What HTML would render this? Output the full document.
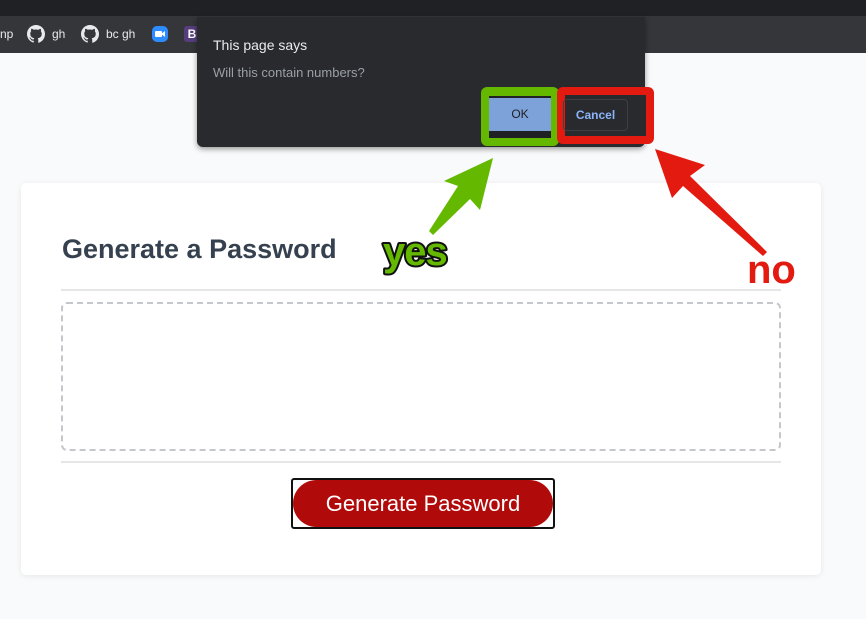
<!DOCTYPE html>
<html><head><meta charset="utf-8"><style>
*{margin:0;padding:0;box-sizing:border-box}
body{width:866px;height:619px;overflow:hidden;background:#f9fafb;font-family:"Liberation Sans",sans-serif;position:relative}
.abs{position:absolute}
</style></head><body>
<div class="abs" style="left:0;top:0;width:866px;height:16px;background:#202124"></div>
<div class="abs" style="left:0;top:16px;width:866px;height:37px;background:#35363a;color:#e8eaed;font-size:12px">
  <span class="abs" style="left:0;top:11px">np</span>
  <svg class="abs" style="left:27px;top:9px" width="18" height="18" viewBox="0 0 16 16"><path fill="#e8eaed" d="M8 0C3.58 0 0 3.58 0 8c0 3.54 2.29 6.53 5.47 7.59.4.07.55-.17.55-.38v-1.33c-2.23.48-2.7-1.07-2.7-1.07-.36-.92-.89-1.17-.89-1.17-.73-.5.05-.49.05-.49.8.06 1.23.83 1.23.83.71 1.22 1.87.87 2.330.66.07-.52.28-.87.51-1.07-1.78-.2-3.64-.89-3.64-3.95 0-.87.31-1.59.82-2.15-.08-.2-.36-1.02.08-2.12 0 0 .67-.21 2.2.82A7.6 7.6 0 0 1 8 4.04c.68 0 1.36.09 2 .27 1.53-1.04 2.2-.82 2.2-.82.44 1.1.16 1.92.08 2.12.51.56.82 1.27.82 2.15 0 3.07-1.87 3.75-3.65 3.95.29.25.54.73.54 1.48v2.2c0 .21.15.46.55.38A8 8 0 0 0 16 8c0-4.42-3.58-8-8-8z"/></svg>
  <span class="abs" style="left:52px;top:11px">gh</span>
  <svg class="abs" style="left:81px;top:9px" width="18" height="18" viewBox="0 0 16 16"><path fill="#e8eaed" d="M8 0C3.58 0 0 3.58 0 8c0 3.54 2.29 6.53 5.47 7.59.4.07.55-.17.55-.38v-1.33c-2.23.48-2.7-1.07-2.7-1.07-.36-.92-.89-1.17-.89-1.17-.73-.5.05-.49.05-.49.8.06 1.23.83 1.23.83.71 1.22 1.87.87 2.33.66.07-.52.28-.87.51-1.07-1.78-.2-3.64-.89-3.64-3.95 0-.87.31-1.59.82-2.15-.08-.2-.36-1.02.08-2.12 0 0 .67-.21 2.2.82A7.6 7.6 0 0 1 8 4.04c.68 0 1.36.09 2 .27 1.53-1.04 2.2-.82 2.2-.82.44 1.1.16 1.92.08 2.12.51.56.82 1.27.82 2.15 0 3.07-1.87 3.75-3.65 3.95.29.25.54.73.54 1.48v2.2c0 .21.15.46.55.38A8 8 0 0 0 16 8c0-4.42-3.58-8-8-8z"/></svg>
  <span class="abs" style="left:106px;top:11px">bc gh</span>
  <div class="abs" style="left:152px;top:10px;width:16px;height:16px;border-radius:5px;background:#2d8cff"><div class="abs" style="left:3px;top:5px;width:7px;height:6px;background:#fff;border-radius:1px"></div><div class="abs" style="left:10px;top:5px;width:3px;height:6px;background:#fff;clip-path:polygon(0 40%,100% 0,100% 100%,0 60%)"></div></div>
  <div class="abs" style="left:184px;top:10px;width:16px;height:16px;border-radius:3px;background:#563d7c;color:#fff;font-weight:bold;font-size:12px;text-align:center;line-height:16px">B</div>
</div>
<div class="abs" style="left:21px;top:183px;width:800px;height:392px;background:#fff;border-radius:5px;box-shadow:0 1px 6px rgba(0,0,0,.08)"></div>
<div class="abs" style="left:62px;top:234px;font-size:27px;font-weight:bold;color:#364150">Generate a Password</div>
<div class="abs" style="left:61px;top:289px;width:720px;height:2px;background:#e5e6e8"></div>
<div class="abs" style="left:61px;top:302px;width:720px;height:149px;border:2px dashed #c4c7cc;border-radius:6px"></div>
<div class="abs" style="left:61px;top:461px;width:720px;height:2px;background:#e5e6e8"></div>
<div class="abs" style="left:291px;top:478px;width:264px;height:51px;border:2px solid #111;border-radius:3px;background:#fff"></div>
<div class="abs" style="left:293px;top:480px;width:260px;height:47px;background:#b00a0a;border-radius:24px;color:#fff;font-size:22px;text-align:center;line-height:47px">Generate Password</div>
<div class="abs" style="left:197px;top:17px;width:448px;height:130px;background:#292a2d;border-radius:0 0 6px 6px;box-shadow:0 2px 6px rgba(0,0,0,.4)"></div>
<div class="abs" style="left:213px;top:37px;font-size:14px;color:#e8eaed">This page says</div>
<div class="abs" style="left:213px;top:65px;font-size:13px;color:#9aa0a6">Will this contain numbers?</div>
<div class="abs" style="left:481px;top:87px;width:78px;height:59px;background:#64b900;border-radius:6px"></div>
<div class="abs" style="left:489px;top:96px;width:62px;height:42px;background:#202124"></div>
<div class="abs" style="left:489px;top:98px;width:62px;height:33px;background:#7ca2d9;font-size:12px;color:#202124;text-align:center;line-height:33px">OK</div>
<div class="abs" style="left:557px;top:87px;width:97px;height:57px;background:#e31a10;border-radius:6px"></div>
<div class="abs" style="left:565px;top:95px;width:81px;height:41px;background:#292a2d"></div>
<div class="abs" style="left:563px;top:99px;width:65px;height:32px;border:1px solid #3c4043;border-radius:4px;font-size:12px;font-weight:bold;color:#8ab4f8;text-align:center;line-height:30px">Cancel</div>
<svg class="abs" style="left:0;top:0" width="866" height="619">
<polygon fill="#64b900" points="429,231 458,186 444,181 493,158 480,210 470,199 433,235"/>
<polygon fill="#e31a10" points="763,256 683,186 672,198 655,149 705,165 690,176 767,252"/>
<text x="383" y="265" font-family="Liberation Sans,sans-serif" font-weight="bold" font-size="40" fill="#64b900" stroke="#111" stroke-width="4" paint-order="stroke" stroke-linejoin="round" letter-spacing="-1">yes</text>
<text x="747" y="283" font-family="Liberation Sans,sans-serif" font-weight="bold" font-size="40" fill="#e31a10">no</text>
</svg>
</body></html>
